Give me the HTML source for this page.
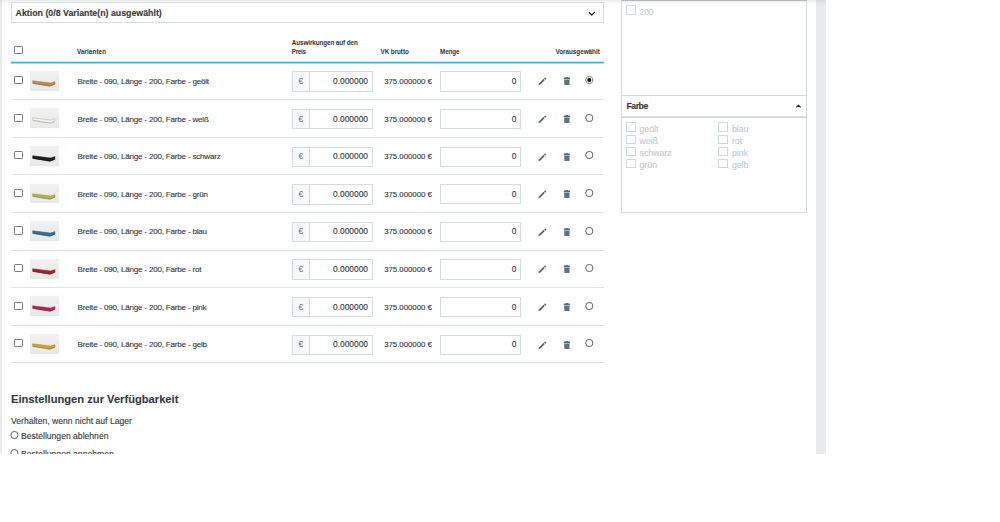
<!DOCTYPE html>
<html><head><meta charset="utf-8"><style>
html,body{margin:0;padding:0;background:#fff;width:1000px;height:522px;overflow:hidden}
body>div,body>svg{position:absolute}
.t{white-space:nowrap;font-family:"Liberation Sans", sans-serif}
</style></head><body>
<div style="left:0px;top:0px;width:2px;height:453.5px;background:#e9eaeb"></div>
<div style="left:816px;top:0px;width:10px;height:453.5px;background:#e9eaeb"></div>
<div style="left:0px;top:0px;width:826px;height:6px;background:linear-gradient(rgba(0,0,0,0.075),rgba(0,0,0,0.02) 50%,rgba(0,0,0,0))"></div>
<div style="left:11px;top:2px;width:593px;height:21px;border:1px solid #d3dee1;box-sizing:border-box;background:#fff"></div>
<div class="t" style="left:15.60px;top:8px;font-size:8.8px;line-height:10px;font-weight:700;color:#363a41;-webkit-text-stroke:0.12px #363a41;">Aktion (0/8 Variante(n) ausgewählt)</div>
<svg style="position:absolute;left:587px;top:10px" width="10" height="8" viewBox="0 0 10 8"><path d="M1.9 2.1 L4.8 5 L7.7 2.1" fill="none" stroke="#25282b" stroke-width="1.25"/></svg>
<div style="left:14.3px;top:45.6px;width:8.5px;height:8px;border:1px solid #7a7a7a;border-radius:1.2px;box-sizing:border-box"></div>
<div class="t" style="left:77.00px;top:48px;font-size:6.3px;line-height:7px;font-weight:700;color:#363a41;letter-spacing:0.08px;-webkit-text-stroke:0.04px #363a41;">Varianten</div>
<div class="t" style="left:291.80px;top:39px;font-size:6.3px;line-height:7px;font-weight:700;color:#363a41;letter-spacing:-0.082px;-webkit-text-stroke:0.04px #363a41;">Auswirkungen auf den</div>
<div class="t" style="left:291.80px;top:48px;font-size:6.3px;line-height:7px;font-weight:700;color:#363a41;letter-spacing:-0.303px;-webkit-text-stroke:0.04px #363a41;">Preis</div>
<div class="t" style="left:380.50px;top:48px;font-size:6.3px;line-height:7px;font-weight:700;color:#363a41;letter-spacing:-0.049px;-webkit-text-stroke:0.04px #363a41;">VK brutto</div>
<div class="t" style="left:440.00px;top:48px;font-size:6.3px;line-height:7px;font-weight:700;color:#363a41;letter-spacing:-0.088px;-webkit-text-stroke:0.04px #363a41;">Menge</div>
<div class="t" style="left:555.40px;top:48px;font-size:6.3px;line-height:7px;font-weight:700;color:#363a41;letter-spacing:0.005px;-webkit-text-stroke:0.04px #363a41;">Vorausgewählt</div>
<div style="left:11px;top:62px;width:593px;height:1px;background:#25b9d7"></div>
<div style="left:11px;top:61px;width:593px;height:1px;background:rgba(37,185,215,0.25)"></div>
<div style="left:11px;top:63px;width:593px;height:1px;background:rgba(37,185,215,0.45)"></div>
<div style="left:14.3px;top:75.9px;width:8.5px;height:8.3px;border:1px solid #7a7a7a;border-radius:1.2px;box-sizing:border-box"></div>
<div style="left:29.6px;top:66.3px;width:29.3px;height:28.4px;background:#fdfdfd"></div>
<div style="left:29.6px;top:70.8px;width:29.3px;height:19.9px;background:linear-gradient(#f1f1f1,#e8e8e8)"></div>
<svg style="position:absolute;left:29.6px;top:70.8px" width="30" height="20" viewBox="0 0 30 20"><path d="M2.7 9.8 L20.6 12.0 L24.9 10.6 L25 13.3 L19.9 15.2 L2.7 12.4 Z" fill="#c08a52" stroke="#9c6a38" stroke-width="0.45"/><path d="M3 12.3 L19.9 15 L24.8 13.2" fill="none" stroke="#9c6a38" stroke-width="0.9" opacity="0.6"/></svg>
<div class="t" style="left:77.60px;top:77px;font-size:8.1px;line-height:9px;font-weight:400;color:#363a41;letter-spacing:-0.216px;-webkit-text-stroke:0.12px #363a41;">Breite - 090, Länge - 200, Farbe - geölt</div>
<div style="left:292px;top:71.3px;width:81px;height:20.5px;border:1px solid #d3dee1;box-sizing:border-box;background:#fff"></div>
<div style="left:292px;top:71.3px;width:17.8px;height:20.5px;border:1px solid #d3dee1;box-sizing:border-box;background:#f6f8f9"></div>
<div class="t" style="left:250.90px;width:100px;text-align:center;top:77px;font-size:8.2px;line-height:9px;font-weight:400;color:#6f828a;-webkit-text-stroke:0.12px #6f828a;">€</div>
<div class="t" style="left:68.00px;width:300px;text-align:right;top:76px;font-size:8.39px;line-height:10px;font-weight:400;color:#363a41;-webkit-text-stroke:0.12px #363a41;">0.000000</div>
<div class="t" style="left:384.20px;top:77px;font-size:7.9px;line-height:9px;font-weight:400;color:#363a41;letter-spacing:-0.057px;-webkit-text-stroke:0.12px #363a41;">375.000000 €</div>
<div style="left:439.9px;top:71.3px;width:81px;height:20.3px;border:1px solid #d3dee1;box-sizing:border-box;background:#fff"></div>
<div class="t" style="left:216.40px;width:300px;text-align:right;top:76px;font-size:8.4px;line-height:10px;font-weight:400;color:#363a41;-webkit-text-stroke:0.12px #363a41;">0</div>
<svg style="position:absolute;left:536px;top:75.40px" width="12" height="12" viewBox="0 0 12 12"><path d="M2.5 9.9 L2.9 8.5 L7.6 3.8 L8.8 5 L4.1 9.7 Z" fill="#4b6470"/><path d="M8.1 3.3 L8.8 2.6 Q9.2 2.3 9.5 2.7 L10.1 3.3 Q10.4 3.7 10.1 4 L9.4 4.7 Z" fill="#4b6470"/></svg>
<svg style="position:absolute;left:562px;top:76.30px" width="10" height="10" viewBox="0 0 10 10"><path d="M1.8 1.4 H8 V3 H1.8 Z M3.9 1 H5.9 V1.4 H3.9 Z M2.2 3.6 H7.6 L7.4 9 H2.4 Z" fill="#526c78"/><path d="M3.8 4.2 V8.5 M5.9 4.2 V8.5" stroke="#8396a0" stroke-width="0.45"/></svg>
<svg style="position:absolute;left:580px;top:71.25px" width="18" height="18" viewBox="0 0 18 18"><circle cx="9.3" cy="9" r="3.6" fill="#fff" stroke="#777" stroke-width="0.95"/><circle cx="9.3" cy="9" r="2.05" fill="#151515"/></svg>
<div style="left:11px;top:99.2px;width:593px;height:1px;background:#dce5e8"></div>
<div style="left:14.3px;top:113.5px;width:8.5px;height:8.3px;border:1px solid #7a7a7a;border-radius:1.2px;box-sizing:border-box"></div>
<div style="left:29.6px;top:103.9px;width:29.3px;height:28.4px;background:#fdfdfd"></div>
<div style="left:29.6px;top:108.4px;width:29.3px;height:19.9px;background:linear-gradient(#f1f1f1,#e8e8e8)"></div>
<svg style="position:absolute;left:29.6px;top:108.4px" width="30" height="20" viewBox="0 0 30 20"><path d="M2.7 9.8 L20.6 12.0 L24.9 10.6 L25 13.3 L19.9 15.2 L2.7 12.4 Z" fill="#f3f1ec" stroke="#aaa69e" stroke-width="0.45"/><path d="M3 12.3 L19.9 15 L24.8 13.2" fill="none" stroke="#aaa69e" stroke-width="0.9" opacity="0.6"/></svg>
<div class="t" style="left:77.60px;top:115px;font-size:8.1px;line-height:9px;font-weight:400;color:#363a41;letter-spacing:-0.216px;-webkit-text-stroke:0.12px #363a41;">Breite - 090, Länge - 200, Farbe - weiß</div>
<div style="left:292px;top:108.9px;width:81px;height:20.5px;border:1px solid #d3dee1;box-sizing:border-box;background:#fff"></div>
<div style="left:292px;top:108.9px;width:17.8px;height:20.5px;border:1px solid #d3dee1;box-sizing:border-box;background:#f6f8f9"></div>
<div class="t" style="left:250.90px;width:100px;text-align:center;top:115px;font-size:8.2px;line-height:9px;font-weight:400;color:#6f828a;-webkit-text-stroke:0.12px #6f828a;">€</div>
<div class="t" style="left:68.00px;width:300px;text-align:right;top:114px;font-size:8.39px;line-height:10px;font-weight:400;color:#363a41;-webkit-text-stroke:0.12px #363a41;">0.000000</div>
<div class="t" style="left:384.20px;top:115px;font-size:7.9px;line-height:9px;font-weight:400;color:#363a41;letter-spacing:-0.057px;-webkit-text-stroke:0.12px #363a41;">375.000000 €</div>
<div style="left:439.9px;top:108.9px;width:81px;height:20.3px;border:1px solid #d3dee1;box-sizing:border-box;background:#fff"></div>
<div class="t" style="left:216.40px;width:300px;text-align:right;top:114px;font-size:8.4px;line-height:10px;font-weight:400;color:#363a41;-webkit-text-stroke:0.12px #363a41;">0</div>
<svg style="position:absolute;left:536px;top:113.00px" width="12" height="12" viewBox="0 0 12 12"><path d="M2.5 9.9 L2.9 8.5 L7.6 3.8 L8.8 5 L4.1 9.7 Z" fill="#4b6470"/><path d="M8.1 3.3 L8.8 2.6 Q9.2 2.3 9.5 2.7 L10.1 3.3 Q10.4 3.7 10.1 4 L9.4 4.7 Z" fill="#4b6470"/></svg>
<svg style="position:absolute;left:562px;top:113.90px" width="10" height="10" viewBox="0 0 10 10"><path d="M1.8 1.4 H8 V3 H1.8 Z M3.9 1 H5.9 V1.4 H3.9 Z M2.2 3.6 H7.6 L7.4 9 H2.4 Z" fill="#526c78"/><path d="M3.8 4.2 V8.5 M5.9 4.2 V8.5" stroke="#8396a0" stroke-width="0.45"/></svg>
<svg style="position:absolute;left:580px;top:108.85px" width="18" height="18" viewBox="0 0 18 18"><circle cx="9.3" cy="9" r="3.6" fill="#fff" stroke="#5a5a5a" stroke-width="0.95"/></svg>
<div style="left:11px;top:136.8px;width:593px;height:1px;background:#dce5e8"></div>
<div style="left:14.3px;top:151.10000000000002px;width:8.5px;height:8.3px;border:1px solid #7a7a7a;border-radius:1.2px;box-sizing:border-box"></div>
<div style="left:29.6px;top:141.5px;width:29.3px;height:28.4px;background:#fdfdfd"></div>
<div style="left:29.6px;top:146.0px;width:29.3px;height:19.9px;background:linear-gradient(#f1f1f1,#e8e8e8)"></div>
<svg style="position:absolute;left:29.6px;top:146.0px" width="30" height="20" viewBox="0 0 30 20"><path d="M2.7 9.8 L20.6 12.0 L24.9 10.6 L25 13.3 L19.9 15.2 L2.7 12.4 Z" fill="#1f1f1f" stroke="#0a0a0a" stroke-width="0.45"/><path d="M3 12.3 L19.9 15 L24.8 13.2" fill="none" stroke="#0a0a0a" stroke-width="0.9" opacity="0.6"/></svg>
<div class="t" style="left:77.60px;top:152px;font-size:8.1px;line-height:9px;font-weight:400;color:#363a41;letter-spacing:-0.216px;-webkit-text-stroke:0.12px #363a41;">Breite - 090, Länge - 200, Farbe - schwarz</div>
<div style="left:292px;top:146.5px;width:81px;height:20.5px;border:1px solid #d3dee1;box-sizing:border-box;background:#fff"></div>
<div style="left:292px;top:146.5px;width:17.8px;height:20.5px;border:1px solid #d3dee1;box-sizing:border-box;background:#f6f8f9"></div>
<div class="t" style="left:250.90px;width:100px;text-align:center;top:152px;font-size:8.2px;line-height:9px;font-weight:400;color:#6f828a;-webkit-text-stroke:0.12px #6f828a;">€</div>
<div class="t" style="left:68.00px;width:300px;text-align:right;top:151px;font-size:8.39px;line-height:10px;font-weight:400;color:#363a41;-webkit-text-stroke:0.12px #363a41;">0.000000</div>
<div class="t" style="left:384.20px;top:152px;font-size:7.9px;line-height:9px;font-weight:400;color:#363a41;letter-spacing:-0.057px;-webkit-text-stroke:0.12px #363a41;">375.000000 €</div>
<div style="left:439.9px;top:146.5px;width:81px;height:20.3px;border:1px solid #d3dee1;box-sizing:border-box;background:#fff"></div>
<div class="t" style="left:216.40px;width:300px;text-align:right;top:151px;font-size:8.4px;line-height:10px;font-weight:400;color:#363a41;-webkit-text-stroke:0.12px #363a41;">0</div>
<svg style="position:absolute;left:536px;top:150.60px" width="12" height="12" viewBox="0 0 12 12"><path d="M2.5 9.9 L2.9 8.5 L7.6 3.8 L8.8 5 L4.1 9.7 Z" fill="#4b6470"/><path d="M8.1 3.3 L8.8 2.6 Q9.2 2.3 9.5 2.7 L10.1 3.3 Q10.4 3.7 10.1 4 L9.4 4.7 Z" fill="#4b6470"/></svg>
<svg style="position:absolute;left:562px;top:151.50px" width="10" height="10" viewBox="0 0 10 10"><path d="M1.8 1.4 H8 V3 H1.8 Z M3.9 1 H5.9 V1.4 H3.9 Z M2.2 3.6 H7.6 L7.4 9 H2.4 Z" fill="#526c78"/><path d="M3.8 4.2 V8.5 M5.9 4.2 V8.5" stroke="#8396a0" stroke-width="0.45"/></svg>
<svg style="position:absolute;left:580px;top:146.45px" width="18" height="18" viewBox="0 0 18 18"><circle cx="9.3" cy="9" r="3.6" fill="#fff" stroke="#5a5a5a" stroke-width="0.95"/></svg>
<div style="left:11px;top:174.4px;width:593px;height:1px;background:#dce5e8"></div>
<div style="left:14.3px;top:188.70000000000002px;width:8.5px;height:8.3px;border:1px solid #7a7a7a;border-radius:1.2px;box-sizing:border-box"></div>
<div style="left:29.6px;top:179.10000000000002px;width:29.3px;height:28.4px;background:#fdfdfd"></div>
<div style="left:29.6px;top:183.60000000000002px;width:29.3px;height:19.9px;background:linear-gradient(#f1f1f1,#e8e8e8)"></div>
<svg style="position:absolute;left:29.6px;top:183.60000000000002px" width="30" height="20" viewBox="0 0 30 20"><path d="M2.7 9.8 L20.6 12.0 L24.9 10.6 L25 13.3 L19.9 15.2 L2.7 12.4 Z" fill="#b8b24a" stroke="#948e2c" stroke-width="0.45"/><path d="M3 12.3 L19.9 15 L24.8 13.2" fill="none" stroke="#948e2c" stroke-width="0.9" opacity="0.6"/></svg>
<div class="t" style="left:77.60px;top:190px;font-size:8.1px;line-height:9px;font-weight:400;color:#363a41;letter-spacing:-0.216px;-webkit-text-stroke:0.12px #363a41;">Breite - 090, Länge - 200, Farbe - grün</div>
<div style="left:292px;top:184.10000000000002px;width:81px;height:20.5px;border:1px solid #d3dee1;box-sizing:border-box;background:#fff"></div>
<div style="left:292px;top:184.10000000000002px;width:17.8px;height:20.5px;border:1px solid #d3dee1;box-sizing:border-box;background:#f6f8f9"></div>
<div class="t" style="left:250.90px;width:100px;text-align:center;top:190px;font-size:8.2px;line-height:9px;font-weight:400;color:#6f828a;-webkit-text-stroke:0.12px #6f828a;">€</div>
<div class="t" style="left:68.00px;width:300px;text-align:right;top:189px;font-size:8.39px;line-height:10px;font-weight:400;color:#363a41;-webkit-text-stroke:0.12px #363a41;">0.000000</div>
<div class="t" style="left:384.20px;top:190px;font-size:7.9px;line-height:9px;font-weight:400;color:#363a41;letter-spacing:-0.057px;-webkit-text-stroke:0.12px #363a41;">375.000000 €</div>
<div style="left:439.9px;top:184.10000000000002px;width:81px;height:20.3px;border:1px solid #d3dee1;box-sizing:border-box;background:#fff"></div>
<div class="t" style="left:216.40px;width:300px;text-align:right;top:189px;font-size:8.4px;line-height:10px;font-weight:400;color:#363a41;-webkit-text-stroke:0.12px #363a41;">0</div>
<svg style="position:absolute;left:536px;top:188.20px" width="12" height="12" viewBox="0 0 12 12"><path d="M2.5 9.9 L2.9 8.5 L7.6 3.8 L8.8 5 L4.1 9.7 Z" fill="#4b6470"/><path d="M8.1 3.3 L8.8 2.6 Q9.2 2.3 9.5 2.7 L10.1 3.3 Q10.4 3.7 10.1 4 L9.4 4.7 Z" fill="#4b6470"/></svg>
<svg style="position:absolute;left:562px;top:189.10px" width="10" height="10" viewBox="0 0 10 10"><path d="M1.8 1.4 H8 V3 H1.8 Z M3.9 1 H5.9 V1.4 H3.9 Z M2.2 3.6 H7.6 L7.4 9 H2.4 Z" fill="#526c78"/><path d="M3.8 4.2 V8.5 M5.9 4.2 V8.5" stroke="#8396a0" stroke-width="0.45"/></svg>
<svg style="position:absolute;left:580px;top:184.05px" width="18" height="18" viewBox="0 0 18 18"><circle cx="9.3" cy="9" r="3.6" fill="#fff" stroke="#5a5a5a" stroke-width="0.95"/></svg>
<div style="left:11px;top:212.0px;width:593px;height:1px;background:#dce5e8"></div>
<div style="left:14.3px;top:226.3px;width:8.5px;height:8.3px;border:1px solid #7a7a7a;border-radius:1.2px;box-sizing:border-box"></div>
<div style="left:29.6px;top:216.7px;width:29.3px;height:28.4px;background:#fdfdfd"></div>
<div style="left:29.6px;top:221.2px;width:29.3px;height:19.9px;background:linear-gradient(#f1f1f1,#e8e8e8)"></div>
<svg style="position:absolute;left:29.6px;top:221.2px" width="30" height="20" viewBox="0 0 30 20"><path d="M2.7 9.8 L20.6 12.0 L24.9 10.6 L25 13.3 L19.9 15.2 L2.7 12.4 Z" fill="#3b6e9a" stroke="#27547a" stroke-width="0.45"/><path d="M3 12.3 L19.9 15 L24.8 13.2" fill="none" stroke="#27547a" stroke-width="0.9" opacity="0.6"/></svg>
<div class="t" style="left:77.60px;top:227px;font-size:8.1px;line-height:9px;font-weight:400;color:#363a41;letter-spacing:-0.216px;-webkit-text-stroke:0.12px #363a41;">Breite - 090, Länge - 200, Farbe - blau</div>
<div style="left:292px;top:221.7px;width:81px;height:20.5px;border:1px solid #d3dee1;box-sizing:border-box;background:#fff"></div>
<div style="left:292px;top:221.7px;width:17.8px;height:20.5px;border:1px solid #d3dee1;box-sizing:border-box;background:#f6f8f9"></div>
<div class="t" style="left:250.90px;width:100px;text-align:center;top:227px;font-size:8.2px;line-height:9px;font-weight:400;color:#6f828a;-webkit-text-stroke:0.12px #6f828a;">€</div>
<div class="t" style="left:68.00px;width:300px;text-align:right;top:226px;font-size:8.39px;line-height:10px;font-weight:400;color:#363a41;-webkit-text-stroke:0.12px #363a41;">0.000000</div>
<div class="t" style="left:384.20px;top:227px;font-size:7.9px;line-height:9px;font-weight:400;color:#363a41;letter-spacing:-0.057px;-webkit-text-stroke:0.12px #363a41;">375.000000 €</div>
<div style="left:439.9px;top:221.7px;width:81px;height:20.3px;border:1px solid #d3dee1;box-sizing:border-box;background:#fff"></div>
<div class="t" style="left:216.40px;width:300px;text-align:right;top:226px;font-size:8.4px;line-height:10px;font-weight:400;color:#363a41;-webkit-text-stroke:0.12px #363a41;">0</div>
<svg style="position:absolute;left:536px;top:225.80px" width="12" height="12" viewBox="0 0 12 12"><path d="M2.5 9.9 L2.9 8.5 L7.6 3.8 L8.8 5 L4.1 9.7 Z" fill="#4b6470"/><path d="M8.1 3.3 L8.8 2.6 Q9.2 2.3 9.5 2.7 L10.1 3.3 Q10.4 3.7 10.1 4 L9.4 4.7 Z" fill="#4b6470"/></svg>
<svg style="position:absolute;left:562px;top:226.70px" width="10" height="10" viewBox="0 0 10 10"><path d="M1.8 1.4 H8 V3 H1.8 Z M3.9 1 H5.9 V1.4 H3.9 Z M2.2 3.6 H7.6 L7.4 9 H2.4 Z" fill="#526c78"/><path d="M3.8 4.2 V8.5 M5.9 4.2 V8.5" stroke="#8396a0" stroke-width="0.45"/></svg>
<svg style="position:absolute;left:580px;top:221.65px" width="18" height="18" viewBox="0 0 18 18"><circle cx="9.3" cy="9" r="3.6" fill="#fff" stroke="#5a5a5a" stroke-width="0.95"/></svg>
<div style="left:11px;top:249.60000000000002px;width:593px;height:1px;background:#dce5e8"></div>
<div style="left:14.3px;top:263.9px;width:8.5px;height:8.3px;border:1px solid #7a7a7a;border-radius:1.2px;box-sizing:border-box"></div>
<div style="left:29.6px;top:254.3px;width:29.3px;height:28.4px;background:#fdfdfd"></div>
<div style="left:29.6px;top:258.8px;width:29.3px;height:19.9px;background:linear-gradient(#f1f1f1,#e8e8e8)"></div>
<svg style="position:absolute;left:29.6px;top:258.8px" width="30" height="20" viewBox="0 0 30 20"><path d="M2.7 9.8 L20.6 12.0 L24.9 10.6 L25 13.3 L19.9 15.2 L2.7 12.4 Z" fill="#a02530" stroke="#7a141c" stroke-width="0.45"/><path d="M3 12.3 L19.9 15 L24.8 13.2" fill="none" stroke="#7a141c" stroke-width="0.9" opacity="0.6"/></svg>
<div class="t" style="left:77.60px;top:265px;font-size:8.1px;line-height:9px;font-weight:400;color:#363a41;letter-spacing:-0.216px;-webkit-text-stroke:0.12px #363a41;">Breite - 090, Länge - 200, Farbe - rot</div>
<div style="left:292px;top:259.3px;width:81px;height:20.5px;border:1px solid #d3dee1;box-sizing:border-box;background:#fff"></div>
<div style="left:292px;top:259.3px;width:17.8px;height:20.5px;border:1px solid #d3dee1;box-sizing:border-box;background:#f6f8f9"></div>
<div class="t" style="left:250.90px;width:100px;text-align:center;top:265px;font-size:8.2px;line-height:9px;font-weight:400;color:#6f828a;-webkit-text-stroke:0.12px #6f828a;">€</div>
<div class="t" style="left:68.00px;width:300px;text-align:right;top:264px;font-size:8.39px;line-height:10px;font-weight:400;color:#363a41;-webkit-text-stroke:0.12px #363a41;">0.000000</div>
<div class="t" style="left:384.20px;top:265px;font-size:7.9px;line-height:9px;font-weight:400;color:#363a41;letter-spacing:-0.057px;-webkit-text-stroke:0.12px #363a41;">375.000000 €</div>
<div style="left:439.9px;top:259.3px;width:81px;height:20.3px;border:1px solid #d3dee1;box-sizing:border-box;background:#fff"></div>
<div class="t" style="left:216.40px;width:300px;text-align:right;top:264px;font-size:8.4px;line-height:10px;font-weight:400;color:#363a41;-webkit-text-stroke:0.12px #363a41;">0</div>
<svg style="position:absolute;left:536px;top:263.40px" width="12" height="12" viewBox="0 0 12 12"><path d="M2.5 9.9 L2.9 8.5 L7.6 3.8 L8.8 5 L4.1 9.7 Z" fill="#4b6470"/><path d="M8.1 3.3 L8.8 2.6 Q9.2 2.3 9.5 2.7 L10.1 3.3 Q10.4 3.7 10.1 4 L9.4 4.7 Z" fill="#4b6470"/></svg>
<svg style="position:absolute;left:562px;top:264.30px" width="10" height="10" viewBox="0 0 10 10"><path d="M1.8 1.4 H8 V3 H1.8 Z M3.9 1 H5.9 V1.4 H3.9 Z M2.2 3.6 H7.6 L7.4 9 H2.4 Z" fill="#526c78"/><path d="M3.8 4.2 V8.5 M5.9 4.2 V8.5" stroke="#8396a0" stroke-width="0.45"/></svg>
<svg style="position:absolute;left:580px;top:259.25px" width="18" height="18" viewBox="0 0 18 18"><circle cx="9.3" cy="9" r="3.6" fill="#fff" stroke="#5a5a5a" stroke-width="0.95"/></svg>
<div style="left:11px;top:287.2px;width:593px;height:1px;background:#dce5e8"></div>
<div style="left:14.3px;top:301.5px;width:8.5px;height:8.3px;border:1px solid #7a7a7a;border-radius:1.2px;box-sizing:border-box"></div>
<div style="left:29.6px;top:291.90000000000003px;width:29.3px;height:28.4px;background:#fdfdfd"></div>
<div style="left:29.6px;top:296.40000000000003px;width:29.3px;height:19.9px;background:linear-gradient(#f1f1f1,#e8e8e8)"></div>
<svg style="position:absolute;left:29.6px;top:296.40000000000003px" width="30" height="20" viewBox="0 0 30 20"><path d="M2.7 9.8 L20.6 12.0 L24.9 10.6 L25 13.3 L19.9 15.2 L2.7 12.4 Z" fill="#b3285c" stroke="#8a1a44" stroke-width="0.45"/><path d="M3 12.3 L19.9 15 L24.8 13.2" fill="none" stroke="#8a1a44" stroke-width="0.9" opacity="0.6"/></svg>
<div class="t" style="left:77.60px;top:303px;font-size:8.1px;line-height:9px;font-weight:400;color:#363a41;letter-spacing:-0.216px;-webkit-text-stroke:0.12px #363a41;">Breite - 090, Länge - 200, Farbe - pink</div>
<div style="left:292px;top:296.90000000000003px;width:81px;height:20.5px;border:1px solid #d3dee1;box-sizing:border-box;background:#fff"></div>
<div style="left:292px;top:296.90000000000003px;width:17.8px;height:20.5px;border:1px solid #d3dee1;box-sizing:border-box;background:#f6f8f9"></div>
<div class="t" style="left:250.90px;width:100px;text-align:center;top:303px;font-size:8.2px;line-height:9px;font-weight:400;color:#6f828a;-webkit-text-stroke:0.12px #6f828a;">€</div>
<div class="t" style="left:68.00px;width:300px;text-align:right;top:302px;font-size:8.39px;line-height:10px;font-weight:400;color:#363a41;-webkit-text-stroke:0.12px #363a41;">0.000000</div>
<div class="t" style="left:384.20px;top:303px;font-size:7.9px;line-height:9px;font-weight:400;color:#363a41;letter-spacing:-0.057px;-webkit-text-stroke:0.12px #363a41;">375.000000 €</div>
<div style="left:439.9px;top:296.90000000000003px;width:81px;height:20.3px;border:1px solid #d3dee1;box-sizing:border-box;background:#fff"></div>
<div class="t" style="left:216.40px;width:300px;text-align:right;top:302px;font-size:8.4px;line-height:10px;font-weight:400;color:#363a41;-webkit-text-stroke:0.12px #363a41;">0</div>
<svg style="position:absolute;left:536px;top:301.00px" width="12" height="12" viewBox="0 0 12 12"><path d="M2.5 9.9 L2.9 8.5 L7.6 3.8 L8.8 5 L4.1 9.7 Z" fill="#4b6470"/><path d="M8.1 3.3 L8.8 2.6 Q9.2 2.3 9.5 2.7 L10.1 3.3 Q10.4 3.7 10.1 4 L9.4 4.7 Z" fill="#4b6470"/></svg>
<svg style="position:absolute;left:562px;top:301.90px" width="10" height="10" viewBox="0 0 10 10"><path d="M1.8 1.4 H8 V3 H1.8 Z M3.9 1 H5.9 V1.4 H3.9 Z M2.2 3.6 H7.6 L7.4 9 H2.4 Z" fill="#526c78"/><path d="M3.8 4.2 V8.5 M5.9 4.2 V8.5" stroke="#8396a0" stroke-width="0.45"/></svg>
<svg style="position:absolute;left:580px;top:296.85px" width="18" height="18" viewBox="0 0 18 18"><circle cx="9.3" cy="9" r="3.6" fill="#fff" stroke="#5a5a5a" stroke-width="0.95"/></svg>
<div style="left:11px;top:324.8px;width:593px;height:1px;background:#dce5e8"></div>
<div style="left:14.3px;top:339.1px;width:8.5px;height:8.3px;border:1px solid #7a7a7a;border-radius:1.2px;box-sizing:border-box"></div>
<div style="left:29.6px;top:329.5px;width:29.3px;height:28.4px;background:#fdfdfd"></div>
<div style="left:29.6px;top:334.0px;width:29.3px;height:19.9px;background:linear-gradient(#f1f1f1,#e8e8e8)"></div>
<svg style="position:absolute;left:29.6px;top:334.0px" width="30" height="20" viewBox="0 0 30 20"><path d="M2.7 9.8 L20.6 12.0 L24.9 10.6 L25 13.3 L19.9 15.2 L2.7 12.4 Z" fill="#cea33e" stroke="#a27d22" stroke-width="0.45"/><path d="M3 12.3 L19.9 15 L24.8 13.2" fill="none" stroke="#a27d22" stroke-width="0.9" opacity="0.6"/></svg>
<div class="t" style="left:77.60px;top:340px;font-size:8.1px;line-height:9px;font-weight:400;color:#363a41;letter-spacing:-0.216px;-webkit-text-stroke:0.12px #363a41;">Breite - 090, Länge - 200, Farbe - gelb</div>
<div style="left:292px;top:334.5px;width:81px;height:20.5px;border:1px solid #d3dee1;box-sizing:border-box;background:#fff"></div>
<div style="left:292px;top:334.5px;width:17.8px;height:20.5px;border:1px solid #d3dee1;box-sizing:border-box;background:#f6f8f9"></div>
<div class="t" style="left:250.90px;width:100px;text-align:center;top:340px;font-size:8.2px;line-height:9px;font-weight:400;color:#6f828a;-webkit-text-stroke:0.12px #6f828a;">€</div>
<div class="t" style="left:68.00px;width:300px;text-align:right;top:339px;font-size:8.39px;line-height:10px;font-weight:400;color:#363a41;-webkit-text-stroke:0.12px #363a41;">0.000000</div>
<div class="t" style="left:384.20px;top:340px;font-size:7.9px;line-height:9px;font-weight:400;color:#363a41;letter-spacing:-0.057px;-webkit-text-stroke:0.12px #363a41;">375.000000 €</div>
<div style="left:439.9px;top:334.5px;width:81px;height:20.3px;border:1px solid #d3dee1;box-sizing:border-box;background:#fff"></div>
<div class="t" style="left:216.40px;width:300px;text-align:right;top:339px;font-size:8.4px;line-height:10px;font-weight:400;color:#363a41;-webkit-text-stroke:0.12px #363a41;">0</div>
<svg style="position:absolute;left:536px;top:338.60px" width="12" height="12" viewBox="0 0 12 12"><path d="M2.5 9.9 L2.9 8.5 L7.6 3.8 L8.8 5 L4.1 9.7 Z" fill="#4b6470"/><path d="M8.1 3.3 L8.8 2.6 Q9.2 2.3 9.5 2.7 L10.1 3.3 Q10.4 3.7 10.1 4 L9.4 4.7 Z" fill="#4b6470"/></svg>
<svg style="position:absolute;left:562px;top:339.50px" width="10" height="10" viewBox="0 0 10 10"><path d="M1.8 1.4 H8 V3 H1.8 Z M3.9 1 H5.9 V1.4 H3.9 Z M2.2 3.6 H7.6 L7.4 9 H2.4 Z" fill="#526c78"/><path d="M3.8 4.2 V8.5 M5.9 4.2 V8.5" stroke="#8396a0" stroke-width="0.45"/></svg>
<svg style="position:absolute;left:580px;top:334.45px" width="18" height="18" viewBox="0 0 18 18"><circle cx="9.3" cy="9" r="3.6" fill="#fff" stroke="#5a5a5a" stroke-width="0.95"/></svg>
<div style="left:11px;top:362.4px;width:593px;height:1px;background:#dce5e8"></div>
<div style="left:621.4px;top:0px;width:185.6px;height:212.5px;border:1px solid #d5dfe2;border-top:0.8px solid #a9bbc0;box-sizing:border-box;background:#fff"></div>
<div style="left:622.4px;top:0.8px;width:183.6px;height:3.2px;background:linear-gradient(#ececec,rgba(255,255,255,0))"></div>
<div style="left:626.1px;top:5.1px;width:9.6px;height:9.6px;border:1px solid #cfdadd;box-sizing:border-box"></div>
<div class="t" style="left:639.60px;top:8px;font-size:8.27px;line-height:9px;font-weight:400;color:#bfccd1;-webkit-text-stroke:0.12px #bfccd1;">200</div>
<div style="left:621.4px;top:95.2px;width:185.6px;height:1px;background:#d0dadd"></div>
<div class="t" style="left:626.50px;top:101px;font-size:8.8px;line-height:10px;font-weight:700;color:#363a41;letter-spacing:-0.541px;-webkit-text-stroke:0.12px #363a41;">Farbe</div>
<svg style="position:absolute;left:794px;top:103px" width="9" height="6" viewBox="0 0 9 6"><path d="M2.3 4.4 L4.5 2.4 L6.7 4.4" fill="none" stroke="#25282b" stroke-width="1.2"/></svg>
<div style="left:621.4px;top:116px;width:185.6px;height:1px;background:#dce4e7"></div>
<div style="left:621.4px;top:117px;width:185.6px;height:1px;background:#c9d5d9"></div>
<div style="left:626.2px;top:122.2px;width:9.6px;height:9.4px;border:1px solid #cfdadd;box-sizing:border-box"></div>
<div class="t" style="left:639.50px;top:124px;font-size:8.76px;line-height:10px;font-weight:400;color:#bfccd1;-webkit-text-stroke:0.12px #bfccd1;">geölt</div>
<div style="left:718px;top:122.2px;width:9.6px;height:9.4px;border:1px solid #cfdadd;box-sizing:border-box"></div>
<div class="t" style="left:731.90px;top:124px;font-size:8.76px;line-height:10px;font-weight:400;color:#bfccd1;-webkit-text-stroke:0.12px #bfccd1;">blau</div>
<div style="left:626.2px;top:134.5px;width:9.6px;height:9.4px;border:1px solid #cfdadd;box-sizing:border-box"></div>
<div class="t" style="left:639.50px;top:136px;font-size:8.76px;line-height:10px;font-weight:400;color:#bfccd1;-webkit-text-stroke:0.12px #bfccd1;">weiß</div>
<div style="left:718px;top:134.5px;width:9.6px;height:9.4px;border:1px solid #cfdadd;box-sizing:border-box"></div>
<div class="t" style="left:731.90px;top:136px;font-size:8.76px;line-height:10px;font-weight:400;color:#bfccd1;-webkit-text-stroke:0.12px #bfccd1;">rot</div>
<div style="left:626.2px;top:146.8px;width:9.6px;height:9.4px;border:1px solid #cfdadd;box-sizing:border-box"></div>
<div class="t" style="left:639.50px;top:148px;font-size:8.76px;line-height:10px;font-weight:400;color:#bfccd1;-webkit-text-stroke:0.12px #bfccd1;">schwarz</div>
<div style="left:718px;top:146.8px;width:9.6px;height:9.4px;border:1px solid #cfdadd;box-sizing:border-box"></div>
<div class="t" style="left:731.90px;top:148px;font-size:8.76px;line-height:10px;font-weight:400;color:#bfccd1;-webkit-text-stroke:0.12px #bfccd1;">pink</div>
<div style="left:626.2px;top:159.10000000000002px;width:9.6px;height:9.4px;border:1px solid #cfdadd;box-sizing:border-box"></div>
<div class="t" style="left:639.50px;top:160px;font-size:8.76px;line-height:10px;font-weight:400;color:#bfccd1;-webkit-text-stroke:0.12px #bfccd1;">grün</div>
<div style="left:718px;top:159.10000000000002px;width:9.6px;height:9.4px;border:1px solid #cfdadd;box-sizing:border-box"></div>
<div class="t" style="left:731.90px;top:160px;font-size:8.76px;line-height:10px;font-weight:400;color:#bfccd1;-webkit-text-stroke:0.12px #bfccd1;">gelb</div>
<div class="t" style="left:11.00px;top:393px;font-size:11.17px;line-height:12px;font-weight:700;color:#363a41;-webkit-text-stroke:0.12px #363a41;">Einstellungen zur Verfügbarkeit</div>
<div class="t" style="left:11.00px;top:416px;font-size:8.6px;line-height:10px;font-weight:400;color:#363a41;-webkit-text-stroke:0.12px #363a41;">Verhalten, wenn nicht auf Lager</div>
<svg style="position:absolute;left:5px;top:426.4px" width="18" height="18" viewBox="0 0 18 18"><circle cx="9.4" cy="9" r="3.55" fill="#fff" stroke="#555" stroke-width="0.9"/></svg>
<div class="t" style="left:21.00px;top:431px;font-size:8.61px;line-height:10px;font-weight:400;color:#363a41;-webkit-text-stroke:0.12px #363a41;">Bestellungen ablehnen</div>
<svg style="position:absolute;left:5px;top:444.4px" width="18" height="18" viewBox="0 0 18 18"><circle cx="9.4" cy="9" r="3.55" fill="#fff" stroke="#555" stroke-width="0.9"/></svg>
<div class="t" style="left:21.00px;top:449px;font-size:8.61px;line-height:10px;font-weight:400;color:#363a41;-webkit-text-stroke:0.12px #363a41;">Bestellungen annehmen</div>
<div style="left:0px;top:453.5px;width:1000px;height:70px;background:#fff"></div>
</body></html>
